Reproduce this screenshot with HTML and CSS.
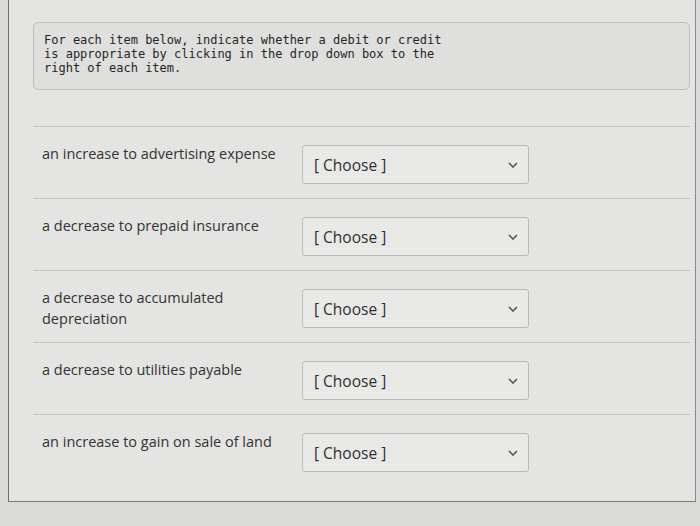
FILE: index.html
```html
<!DOCTYPE html>
<html>
<head>
<meta charset="utf-8">
<link rel="stylesheet" href="styles.css">
</head>
<body>
<div class="outer">
  <div class="instructions">For each item below, indicate whether a debit or credit
is appropriate by clicking in the drop down box to the
right of each item.</div>
  <div class="rows">
    <div class="row">
      <div class="label">an increase to advertising expense</div>
      <div class="select"><span>[ Choose ]</span><svg class="chev" viewBox="0 0 10 6" width="10" height="6"><path d="M1 1 L5 5 L9 1" fill="none" stroke="#555" stroke-width="1.6"/></svg></div>
    </div>
    <div class="row">
      <div class="label">a decrease to prepaid insurance</div>
      <div class="select"><span>[ Choose ]</span><svg class="chev" viewBox="0 0 10 6" width="10" height="6"><path d="M1 1 L5 5 L9 1" fill="none" stroke="#555" stroke-width="1.6"/></svg></div>
    </div>
    <div class="row">
      <div class="label">a decrease to accumulated<br>depreciation</div>
      <div class="select"><span>[ Choose ]</span><svg class="chev" viewBox="0 0 10 6" width="10" height="6"><path d="M1 1 L5 5 L9 1" fill="none" stroke="#555" stroke-width="1.6"/></svg></div>
    </div>
    <div class="row">
      <div class="label">a decrease to utilities payable</div>
      <div class="select"><span>[ Choose ]</span><svg class="chev" viewBox="0 0 10 6" width="10" height="6"><path d="M1 1 L5 5 L9 1" fill="none" stroke="#555" stroke-width="1.6"/></svg></div>
    </div>
    <div class="row">
      <div class="label">an increase to gain on sale of land</div>
      <div class="select"><span>[ Choose ]</span><svg class="chev" viewBox="0 0 10 6" width="10" height="6"><path d="M1 1 L5 5 L9 1" fill="none" stroke="#555" stroke-width="1.6"/></svg></div>
    </div>
  </div>
</div>
</body>
</html>
```

FILE: styles.css
```css
html, body {
  margin: 0;
  padding: 0;
  background: #dadad8;
  height: 526px;
  overflow: hidden;
}

.outer {
  margin-left: 8px;
  width: 688px;
  height: 502px;
  box-sizing: border-box;
  background: #e4e4e2;
  border-left: 1px solid #6e6e6e;
  border-right: 1px solid #8a8a8a;
  border-bottom: 1px solid #7a7a7a;
  padding: 22px 6px 0 24px;
}

.instructions {
  width: 657px;
  height: 68px;
  box-sizing: border-box;
  background: #dfdfdd;
  border: 1px solid #bdbdbb;
  border-radius: 5px;
  padding: 10px 10px;
  font-family: "DejaVu Sans Mono", "Liberation Mono", monospace;
  font-size: 12px;
  line-height: 14px;
  color: #262626;
  white-space: pre;
}

.rows {
  margin-top: 36px;
  width: 657px;
}

.row {
  display: flex;
  align-items: flex-start;
  border-top: 1px solid #c4c4c2;
  height: 72px;
  box-sizing: border-box;
  padding-top: 16px;
}

.label {
  width: 269px;
  padding-left: 9px;
  box-sizing: border-box;
  font-family: "Open Sans", "Liberation Sans", sans-serif;
  font-size: 14.5px;
  line-height: 21px;
  color: #333;
}

.select {
  margin-top: 2px;
  width: 227px;
  height: 39px;
  box-sizing: border-box;
  background: #e9e9e7;
  border: 1px solid #b9b9b7;
  border-radius: 3px;
  display: flex;
  align-items: center;
  justify-content: space-between;
  padding: 0 10px 0 11px;
  font-family: "Open Sans", "Liberation Sans", sans-serif;
  font-size: 15.5px;
  color: #2f2f2f;
}

.chev {
  display: block;
}
```
